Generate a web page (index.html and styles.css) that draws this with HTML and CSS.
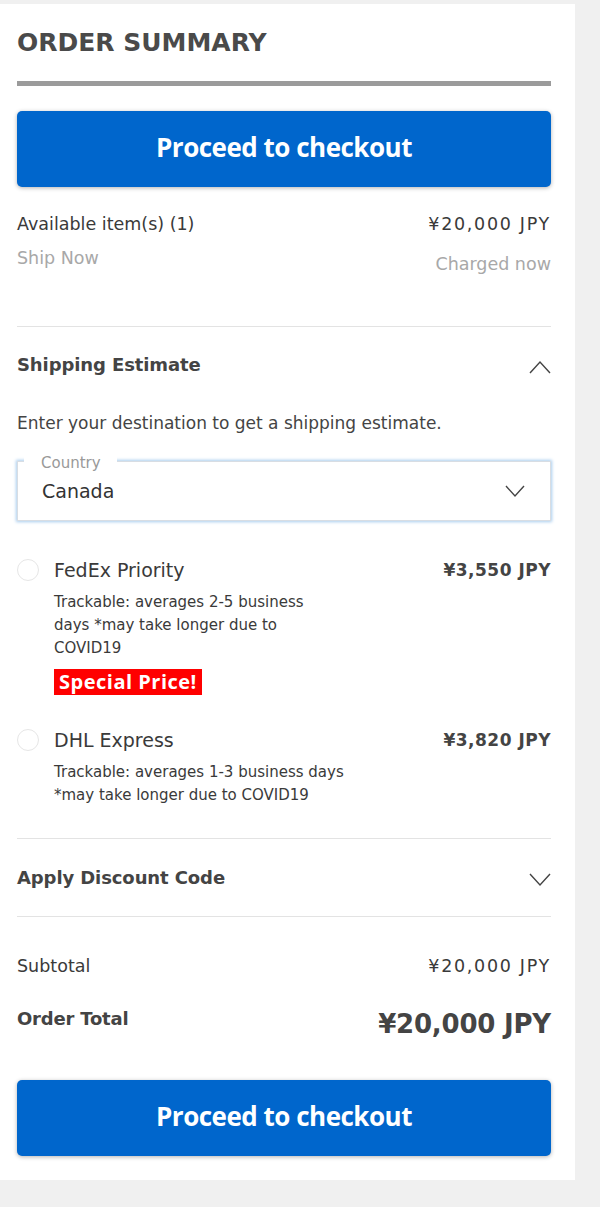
FILE: index.html
```html
<!DOCTYPE html>
<html>
<head>
<meta charset="utf-8">
<link rel="stylesheet" href="styles.css">
</head>
<body>
<div class="panel">
  <h1 class="title">ORDER SUMMARY</h1>
  <div class="title-bar"></div>
  <button class="checkout">Proceed to checkout</button>

  <div class="items">
    <div class="row">
      <span class="dark">Available item(s) (1)</span>
      <span class="dark price">¥20,000 JPY</span>
    </div>
    <div class="row sub">
      <span class="muted">Ship Now</span>
      <span class="muted charged">Charged now</span>
    </div>
  </div>

  <div class="section">
    <div class="sec-head">
      <span class="sec-title">Shipping Estimate</span>
      <svg class="chev" width="22" height="14" viewBox="0 0 22 14"><path d="M1 13 L11 2 L21 13" fill="none" stroke="#444" stroke-width="1.4"/></svg>
    </div>
    <p class="hint">Enter your destination to get a shipping estimate.</p>
    <div class="select">
      <span class="select-label">Country</span>
      <span class="select-value">Canada</span>
      <svg class="select-chev" width="20" height="13" viewBox="0 0 20 13"><path d="M1 1 L10 11 L19 1" fill="none" stroke="#444" stroke-width="1.4"/></svg>
    </div>

    <div class="option">
      <span class="radio"></span>
      <div class="opt-body">
        <div class="opt-head">
          <span class="opt-name">FedEx Priority</span>
          <span class="opt-price">¥3,550 JPY</span>
        </div>
        <p class="opt-desc">Trackable: averages 2-5 business<br>days *may take longer due to<br>COVID19</p>
        <span class="badge">Special Price!</span>
      </div>
    </div>

    <div class="option second">
      <span class="radio"></span>
      <div class="opt-body">
        <div class="opt-head">
          <span class="opt-name">DHL Express</span>
          <span class="opt-price">¥3,820 JPY</span>
        </div>
        <p class="opt-desc">Trackable: averages 1-3 business days<br>*may take longer due to COVID19</p>
      </div>
    </div>
  </div>

  <div class="section discount">
    <div class="sec-head">
      <span class="sec-title">Apply Discount Code</span>
      <svg class="chev" width="22" height="14" viewBox="0 0 22 14"><path d="M1 1 L11 12 L21 1" fill="none" stroke="#444" stroke-width="1.4"/></svg>
    </div>
  </div>

  <div class="totals">
    <div class="row subtotal">
      <span class="dark">Subtotal</span>
      <span class="dark price">¥20,000 JPY</span>
    </div>
    <div class="row total">
      <span class="total-label">Order Total</span>
      <span class="total-value">¥20,000 JPY</span>
    </div>
  </div>

  <button class="checkout bottom">Proceed to checkout</button>
</div>
</body>
</html>
```

FILE: styles.css
```css
html, body {
  margin: 0;
  padding: 0;
  background: #f0f0f0;
}
body {
  font-family: "DejaVu Sans", "Noto Sans", sans-serif;
  color: #444;
  padding-top: 4px;
  height: 1203px;
}
.panel {
  width: 534px;
  background: #fff;
  padding: 1px 24px 24px 17px;
}
.title {
  margin: 22px 0 0;
  font-size: 25px;
  line-height: 32px;
  font-weight: 700;
  color: #4a4a4a;
  letter-spacing: 0;
}
.title-bar {
  height: 5px;
  background: #9b9b9b;
  margin-top: 22px;
}
.checkout {
  display: block;
  width: 100%;
  height: 76px;
  margin-top: 25px;
  border: none;
  border-radius: 5px;
  background: #0066cc;
  color: #fff;
  font-family: "Open Sans", sans-serif;
  font-weight: 700;
  font-size: 26px;
  letter-spacing: -0.5px;
  box-shadow: 0 1px 4px rgba(0,0,0,0.3);
  padding: 0 0 4px;
}
.items {
  padding: 24px 0 49px;
  border-bottom: 1px solid #e3e3e3;
}
.row {
  display: flex;
  justify-content: space-between;
  align-items: flex-start;
  font-size: 17.5px;
  line-height: 26px;
}
.price { letter-spacing: 1.7px; }
.dark { color: #3a3a3a; }
.muted { color: #a8a8a8; }
.sub { margin-top: 8px; }
.charged { margin-top: 6px; }

.section {
  border-bottom: 1px solid #e3e3e3;
  padding: 25px 0 31px;
}
.sec-head {
  display: flex;
  justify-content: space-between;
  align-items: center;
}
.sec-title {
  font-size: 18px;
  font-weight: 700;
  line-height: 26px;
  color: #444;
  letter-spacing: -0.1px;
}
.chev { margin-top: 4px; }
.hint {
  margin: 33px 0 0;
  font-size: 17px;
  line-height: 24px;
  color: #444;
}
.select {
  position: relative;
  margin-top: 26px;
  height: 58px;
  border: 1px solid #d8dde3;
  box-shadow: 0 0 3px 1px #a9cdee;
  display: flex;
  align-items: center;
  justify-content: space-between;
  padding: 0 25px 0 24px;
}
.select-label {
  position: absolute;
  left: 6px;
  top: -8px;
  background: #fff;
  padding: 0 16px 0 17px;
  font-size: 15px;
  line-height: 18px;
  color: #999;
}
.select-value {
  font-size: 19px;
  line-height: 26px;
  color: #333;
}
.option {
  display: flex;
  margin-top: 36px;
}
.option.second { margin-top: 32px; }
.radio {
  flex: none;
  width: 20px;
  height: 20px;
  border: 1px solid #e6e6e6;
  border-radius: 50%;
  margin-top: 2px;
  margin-right: 15px;
}
.opt-body { flex: 1; }
.opt-head {
  display: flex;
  justify-content: space-between;
  align-items: center;
}
.opt-name {
  font-size: 19px;
  line-height: 26px;
  color: #3a3a3a;
}
.opt-price {
  font-size: 17px;
  line-height: 26px;
  font-weight: 700;
  color: #444;
  letter-spacing: 0.5px;
}
.opt-desc {
  margin: 8px 0 0;
  font-size: 15px;
  line-height: 23px;
  color: #3a3a3a;
}
.badge {
  display: inline-block;
  margin-top: 9px;
  background: #ff0000;
  color: #fff;
  font-family: "Open Sans", sans-serif;
  font-weight: 700;
  font-size: 20px;
  line-height: 26px;
  padding: 0 5px;
  letter-spacing: 0.5px;
}
.discount { padding: 26px 0 25px; }
.totals { padding-top: 36px; }
.total {
  margin-top: 32px;
  align-items: center;
}
.total-label {
  font-size: 18px;
  font-weight: 700;
  color: #444;
  margin-top: -10px;
  letter-spacing: -0.2px;
}
.total-value {
  font-size: 26px;
  font-weight: 700;
  color: #444;
  letter-spacing: -0.2px;
}
.checkout.bottom { margin-top: 43px; }
```
